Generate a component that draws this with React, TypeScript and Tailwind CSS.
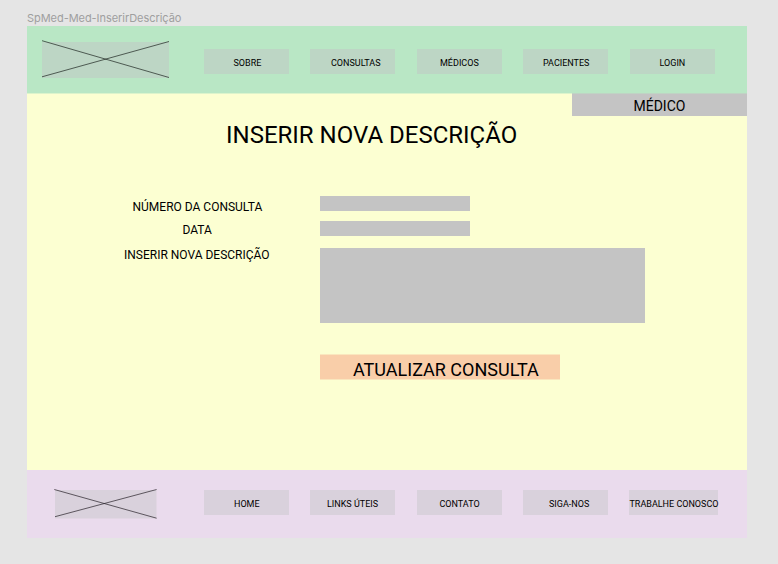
type Item = { label: string; box: string };

const headerItems: Item[] = [
  { label: "SOBRE", box: "w-[85px] pl-[29.5px]" },
  { label: "CONSULTAS", box: "w-[85px] ml-[21px] pl-[21px]" },
  { label: "MÉDICOS", box: "w-[85px] ml-[22px] pl-[23px]" },
  { label: "PACIENTES", box: "w-[85px] ml-[21px] pl-[20px]" },
  { label: "LOGIN", box: "w-[85px] ml-[22px] pl-[29.5px]" },
];

const footerItems: Item[] = [
  { label: "HOME", box: "w-[85px] pl-[30px]" },
  { label: "LINKS ÚTEIS", box: "w-[85px] ml-[21px] pl-[17px]" },
  { label: "CONTATO", box: "w-[85px] ml-[21.5px] pl-[23px]" },
  { label: "SIGA-NOS", box: "w-[85px] ml-[21.5px] pl-[26px]" },
  { label: "TRABALHE CONOSCO", box: "w-[89px] ml-[21px] pl-[0.5px]" },
];

function Nav({ items, color }: { items: Item[]; color: string }) {
  return (
    <nav className="flex">
      {items.map((item) => (
        <a
          key={item.label}
          className={`block h-[25px] shrink-0 whitespace-nowrap pt-[2px] text-[9px] leading-[25px] ${color} ${item.box}`}
        >
          {item.label}
        </a>
      ))}
    </nav>
  );
}

export default function App() {
  return (
    <div className="h-[564px] w-[778px] overflow-hidden bg-[#e5e5e5] pl-[27px] font-['Roboto',sans-serif] text-black">
      <div className="h-[26px] pt-[11px] font-['Inter',sans-serif] text-[11px] leading-[15px] tracking-[-0.05px] text-[#9f9f9f]">
        SpMed-Med-InserirDescrição
      </div>
      <div className="flex h-[512px] w-[720px] flex-col">
        <header className="flex h-[67px] shrink-0 items-start bg-[#b9e7c5] pt-[23px]">
          <svg className="-mt-[9px] ml-[15px] mr-[35px] h-[38px] w-[127px] shrink-0" viewBox="0 0 127 38">
            <rect y="2" width="127" height="36" fill="#bdd6c5" />
            <path d="M0 .7 127 37.5M0 36.8 127 1.5" stroke="#1d241f" strokeWidth=".7" />
          </svg>
          <Nav items={headerItems} color="bg-[#bdd6c5]" />
        </header>

        <main className="flex h-[377px] shrink-0 flex-col border-t border-[#dcf4cc] bg-[#fcffd2]">
          <div className="-mt-px h-[23px] w-[175px] self-end border-t border-[#bfd4c4] bg-[#c4c4c4] pl-[61.5px] pt-px text-[14px] leading-[23px]">
            MÉDICO
          </div>
          <h1 className="ml-[199px] mt-[5px] h-[28px] whitespace-nowrap text-[24px] leading-[28px]">
            INSERIR NOVA DESCRIÇÃO
          </h1>
          <form className="mt-[47px] flex">
            <div className="flex w-[293px] flex-col pt-[4px] text-[12px] leading-[14px]">
              <label className="pl-[105.5px]">NÚMERO DA CONSULTA</label>
              <label className="mt-[9px] pl-[155.5px]">DATA</label>
              <label className="mt-[11px] whitespace-nowrap pl-[97px]">INSERIR NOVA DESCRIÇÃO</label>
            </div>
            <div className="flex flex-col items-start">
              <div className="h-[15px] w-[150px] bg-[#c4c4c4]" />
              <div className="mt-[10px] h-[15px] w-[150px] bg-[#c4c4c4]" />
              <div className="mt-[12px] h-[75px] w-[325px] bg-[#c4c4c4]" />
              <button
                type="button"
                className="mt-[31px] flex h-[26px] w-[240px] items-start whitespace-nowrap border-y border-[#fae7be] bg-[#f9cea9] pl-[33px] pt-[3px] text-left text-[18px] leading-[24px]"
              >
                ATUALIZAR CONSULTA
              </button>
            </div>
          </form>
        </main>

        <footer className="flex h-[68px] shrink-0 items-start bg-[#eadbed] pt-[20px]">
          <svg className="-mt-[1px] ml-[27px] mr-[47px] h-[30px] w-[103px] shrink-0" viewBox="0 0 103 30">
            <rect x="1" y="1" width="101.5" height="28.5" fill="#d9d1dc" />
            <path d="M.3.5 102.6 29.2M1 27.7 102.6.5" stroke="#252026" strokeWidth=".7" />
          </svg>
          <Nav items={footerItems} color="bg-[#d9d1dc]" />
        </footer>
      </div>
    </div>
  );
}
